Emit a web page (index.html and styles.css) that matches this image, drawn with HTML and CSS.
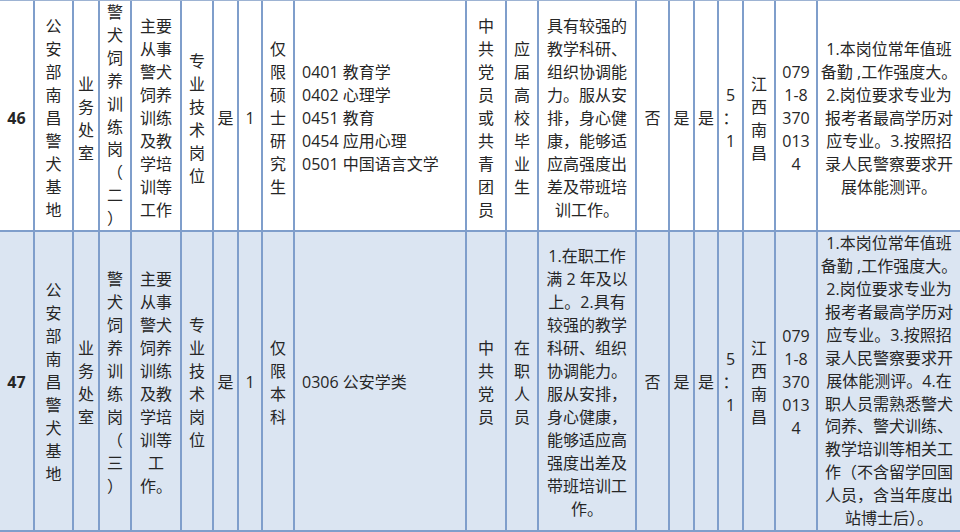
FILE: index.html
```html
<!DOCTYPE html>
<html lang="zh-CN">
<head>
<meta charset="utf-8">
<title>招录职位表</title>
<link rel="stylesheet" href="styles.css">
</head>
<body>
<table class="jobs">
  <colgroup>
    <col class="w35"><col class="w39"><col class="w26"><col class="w32"><col class="w50">
    <col class="w32"><col class="w25"><col class="w24"><col class="w32"><col class="w172">
    <col class="w40"><col class="w32"><col class="w98"><col class="w33"><col class="w25">
    <col class="w24"><col class="w25"><col class="w32"><col class="w42"><col class="w142">
  </colgroup>
  <tbody>
    <tr class="row-a">
      <td class="num">46</td>
      <td>公<br>安<br>部<br>南<br>昌<br>警<br>犬<br>基<br>地</td>
      <td>业<br>务<br>处<br>室</td>
      <td class="tight">警<br>犬<br>饲<br>养<br>训<br>练<br>岗<br>（<br>二<br>）</td>
      <td>主要<br>从事<br>警犬<br>饲养<br>训练<br>及教<br>学培<br>训等<br>工作</td>
      <td>专<br>业<br>技<br>术<br>岗<br>位</td>
      <td>是</td>
      <td>1</td>
      <td>仅<br>限<br>硕<br>士<br>研<br>究<br>生</td>
      <td class="left">0401 教育学<br>0402 心理学<br>0451 教育<br>0454 应用心理<br>0501 中国语言文学</td>
      <td>中<br>共<br>党<br>员<br>或<br>共<br>青<br>团<br>员</td>
      <td>应<br>届<br>高<br>校<br>毕<br>业<br>生</td>
      <td>具有较强的<br>教学科研、<br>组织协调能<br>力。服从安<br>排，身心健<br>康，能够适<br>应高强度出<br>差及带班培<br>训工作。</td>
      <td>否</td>
      <td>是</td>
      <td>是</td>
      <td>5<br>：<br>1</td>
      <td>江<br>西<br>南<br>昌</td>
      <td>079<br>1-8<br>370<br>013<br>4</td>
      <td class="last">1.本岗位常年值班<br>备勤 ,工作强度大。<br>2.岗位要求专业为<br>报考者最高学历对<br>应专业。3.按照招<br>录人民警察要求开<br>展体能测评。</td>
    </tr>
    <tr class="row-b">
      <td class="num">47</td>
      <td>公<br>安<br>部<br>南<br>昌<br>警<br>犬<br>基<br>地</td>
      <td>业<br>务<br>处<br>室</td>
      <td>警<br>犬<br>饲<br>养<br>训<br>练<br>岗<br>（<br>三<br>）</td>
      <td>主要<br>从事<br>警犬<br>饲养<br>训练<br>及教<br>学培<br>训等<br>工<br>作。</td>
      <td>专<br>业<br>技<br>术<br>岗<br>位</td>
      <td>是</td>
      <td>1</td>
      <td>仅<br>限<br>本<br>科</td>
      <td class="left">0306 公安学类</td>
      <td>中<br>共<br>党<br>员</td>
      <td>在<br>职<br>人<br>员</td>
      <td>1.在职工作<br>满 2 年及以<br>上。2.具有<br>较强的教学<br>科研、组织<br>协调能力。<br>服从安排，<br>身心健康，<br>能够适应高<br>强度出差及<br>带班培训工<br>作。</td>
      <td>否</td>
      <td>是</td>
      <td>是</td>
      <td>5<br>：<br>1</td>
      <td>江<br>西<br>南<br>昌</td>
      <td>079<br>1-8<br>370<br>013<br>4</td>
      <td class="last tight">1.本岗位常年值班<br>备勤 ,工作强度大。<br>2.岗位要求专业为<br>报考者最高学历对<br>应专业。3.按照招<br>录人民警察要求开<br>展体能测评。4.在<br>职人员需熟悉警犬<br>饲养、警犬训练、<br>教学培训等相关工<br>作（不含留学回国<br>人员，含当年度出<br>站博士后）。</td>
    </tr>
  </tbody>
</table>
</body>
</html>
```

FILE: styles.css
```css
html, body {
  margin: 0;
  padding: 0;
  background: #ffffff;
}

body {
  width: 960px;
  height: 532px;
  overflow: hidden;
}

.jobs {
  table-layout: fixed;
  width: 960px;
  border-collapse: separate;
  border-spacing: 0;
  border-top: 1px solid #9db3d3;
  font-family: "Open Sans", "Noto Sans CJK SC", sans-serif;
  font-size: 16px;
  line-height: 23px;
  color: #262626;
}

.w35 { width: 35px; }
.w39 { width: 39px; }
.w26 { width: 26px; }
.w32 { width: 32px; }
.w50 { width: 50px; }
.w25 { width: 25px; }
.w24 { width: 24px; }
.w172 { width: 172px; }
.w40 { width: 40px; }
.w98 { width: 98px; }
.w33 { width: 33px; }
.w42 { width: 42px; }
.w142 { width: 142px; }

.jobs td {
  padding: 3px 0 0 0;
  border-right: 2px solid #7f9ecb;
  border-bottom: 2px solid #7f9ecb;
  text-align: center;
  vertical-align: middle;
  white-space: nowrap;
  overflow: hidden;
}

.row-a td {
  padding-top: 6px;
}

.jobs td.last {
  border-right: none;
}

.row-a {
  height: 231px;
  background: #ffffff;
}

.row-b {
  height: 300px;
  background: #dbe5f2;
}

.jobs td.num {
  font-weight: 700;
  font-size: 16px;
}

.jobs td.left {
  text-align: left;
  padding-left: 7px;
}

.jobs td.tight {
  padding-top: 0;
  line-height: 22.9px;
}
```
